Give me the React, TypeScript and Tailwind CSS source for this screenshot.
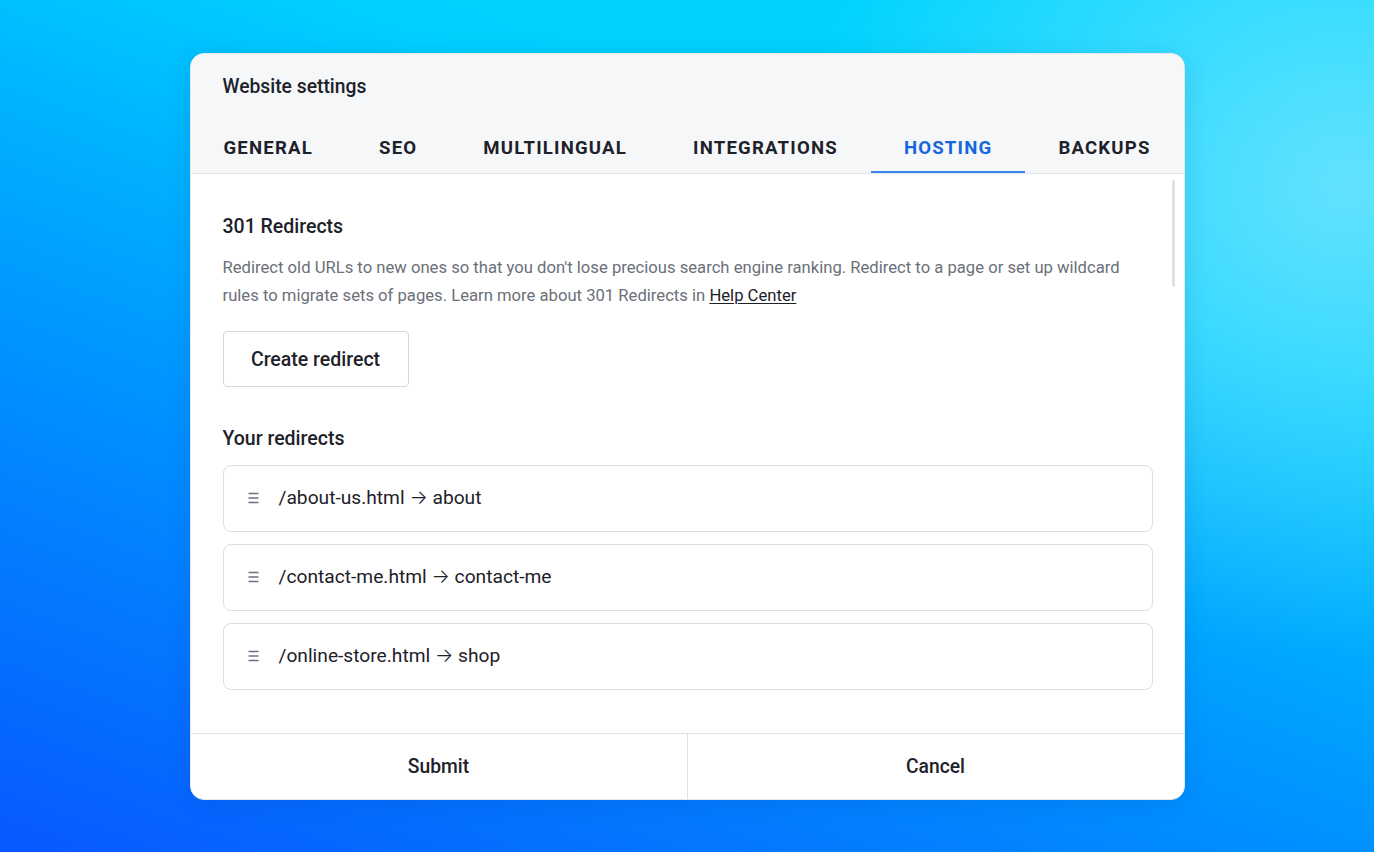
import React from 'react';

const tabs = ['General', 'SEO', 'Multilingual', 'Integrations', 'Hosting', 'Backups'];

const redirects = [
  { from: '/about-us.html', to: 'about' },
  { from: '/contact-me.html', to: 'contact-me' },
  { from: '/online-store.html', to: 'shop' },
];

function DragHandle() {
  return (
    <svg className="h-3 w-[11px] shrink-0 text-gray-500" viewBox="0 0 11 12" fill="none">
      <path d="M0.5 1.5h10M0.5 6h10M0.5 10.5h10" stroke="currentColor" strokeWidth="1.5" />
    </svg>
  );
}

export default function App() {
  return (
    <div
      className="flex min-h-screen items-center justify-center bg-[radial-gradient(ellipse_40%_55%_at_98%_22%,rgba(140,232,255,0.7),transparent),linear-gradient(20deg,#0758ff_0%,#0096ff_40%,#00d0ff_72%,#00d6ff_100%)] font-['Roboto',sans-serif]"
    >
      <div className="flex h-[747px] w-[995px] flex-col overflow-hidden rounded-[14px] border border-gray-200 bg-white shadow-[0_4px_24px_rgba(0,40,120,0.12)]">
        {/* Header */}
        <div className="bg-[#f6f7f9] pt-[21px]">
          <h1 className="px-[32px] text-[19.3px] font-medium leading-6 text-[#1d2129]">Website settings</h1>
          <div className="mt-[22px] flex border-b border-[#e2e4e8]">
            {tabs.map((tab) => {
              const active = tab === 'Hosting';
              return (
                <div
                  key={tab}
                  className={
                    active
                      ? 'flex h-[52px] items-center border-b-2 border-[#3d86ee] px-[33px] pt-[6px] text-[18.6px] font-bold uppercase tracking-[0.064em] text-[#1467dd]'
                      : 'flex h-[52px] items-center border-b-2 border-transparent px-[33px] pt-[6px] text-[18.6px] font-bold uppercase tracking-[0.064em] text-[#1d2129]'
                  }
                >
                  {tab}
                </div>
              );
            })}
          </div>
        </div>

        {/* Content */}
        <div className="relative flex-1 overflow-hidden">
          <div className="pl-[32px] pr-[31px] pt-[41px]">
            <h2 className="text-[19.5px] font-medium leading-6 text-[#1d2129]">301 Redirects</h2>
            <p className="mt-[15px] max-w-[905px] text-[16.65px] leading-7 text-[#6b7079]">
              Redirect old URLs to new ones so that you don't lose precious search engine ranking. Redirect to a page or set up wildcard rules to migrate sets of pages. Learn more about 301 Redirects in{' '}
              <a href="#" className="text-[#1d2129] underline underline-offset-2">
                Help Center
              </a>
            </p>
            <button
              type="button"
              className="mt-[21px] h-[56px] w-[186px] rounded-[4px] border border-[#d5d8dd] bg-white pt-[2px] text-[19.5px] font-medium text-[#1d2129]"
            >
              Create redirect
            </button>

            <h2 className="mt-[40px] text-[19.5px] font-medium leading-6 text-[#1d2129]">Your redirects</h2>
            <div className="mt-[14px] flex flex-col gap-3">
              {redirects.map((r) => (
                <div
                  key={r.from}
                  className="flex h-[67px] items-center gap-5 rounded-[8px] border border-[#dcdee2] px-6 text-[19.2px] text-[#1d2129]"
                >
                  <DragHandle />
                  <span>
                    {r.from} <span className="font-['Inter',sans-serif] font-light">→</span> {r.to}
                  </span>
                </div>
              ))}
            </div>
          </div>
          {/* scrollbar thumb */}
          <div className="absolute right-[9px] top-[6px] h-[107px] w-[3px] rounded-full bg-[#dfe1e5]" />
        </div>

        {/* Footer */}
        <div className="flex h-[66px] border-t border-[#dfe1e5]">
          <button type="button" className="flex-1 pt-[2px] text-[19.3px] font-medium text-[#1d2129]">
            Submit
          </button>
          <div className="w-px bg-[#dfe1e5]" />
          <button type="button" className="flex-1 pt-[2px] text-[19.3px] font-medium text-[#1d2129]">
            Cancel
          </button>
        </div>
      </div>
    </div>
  );
}
